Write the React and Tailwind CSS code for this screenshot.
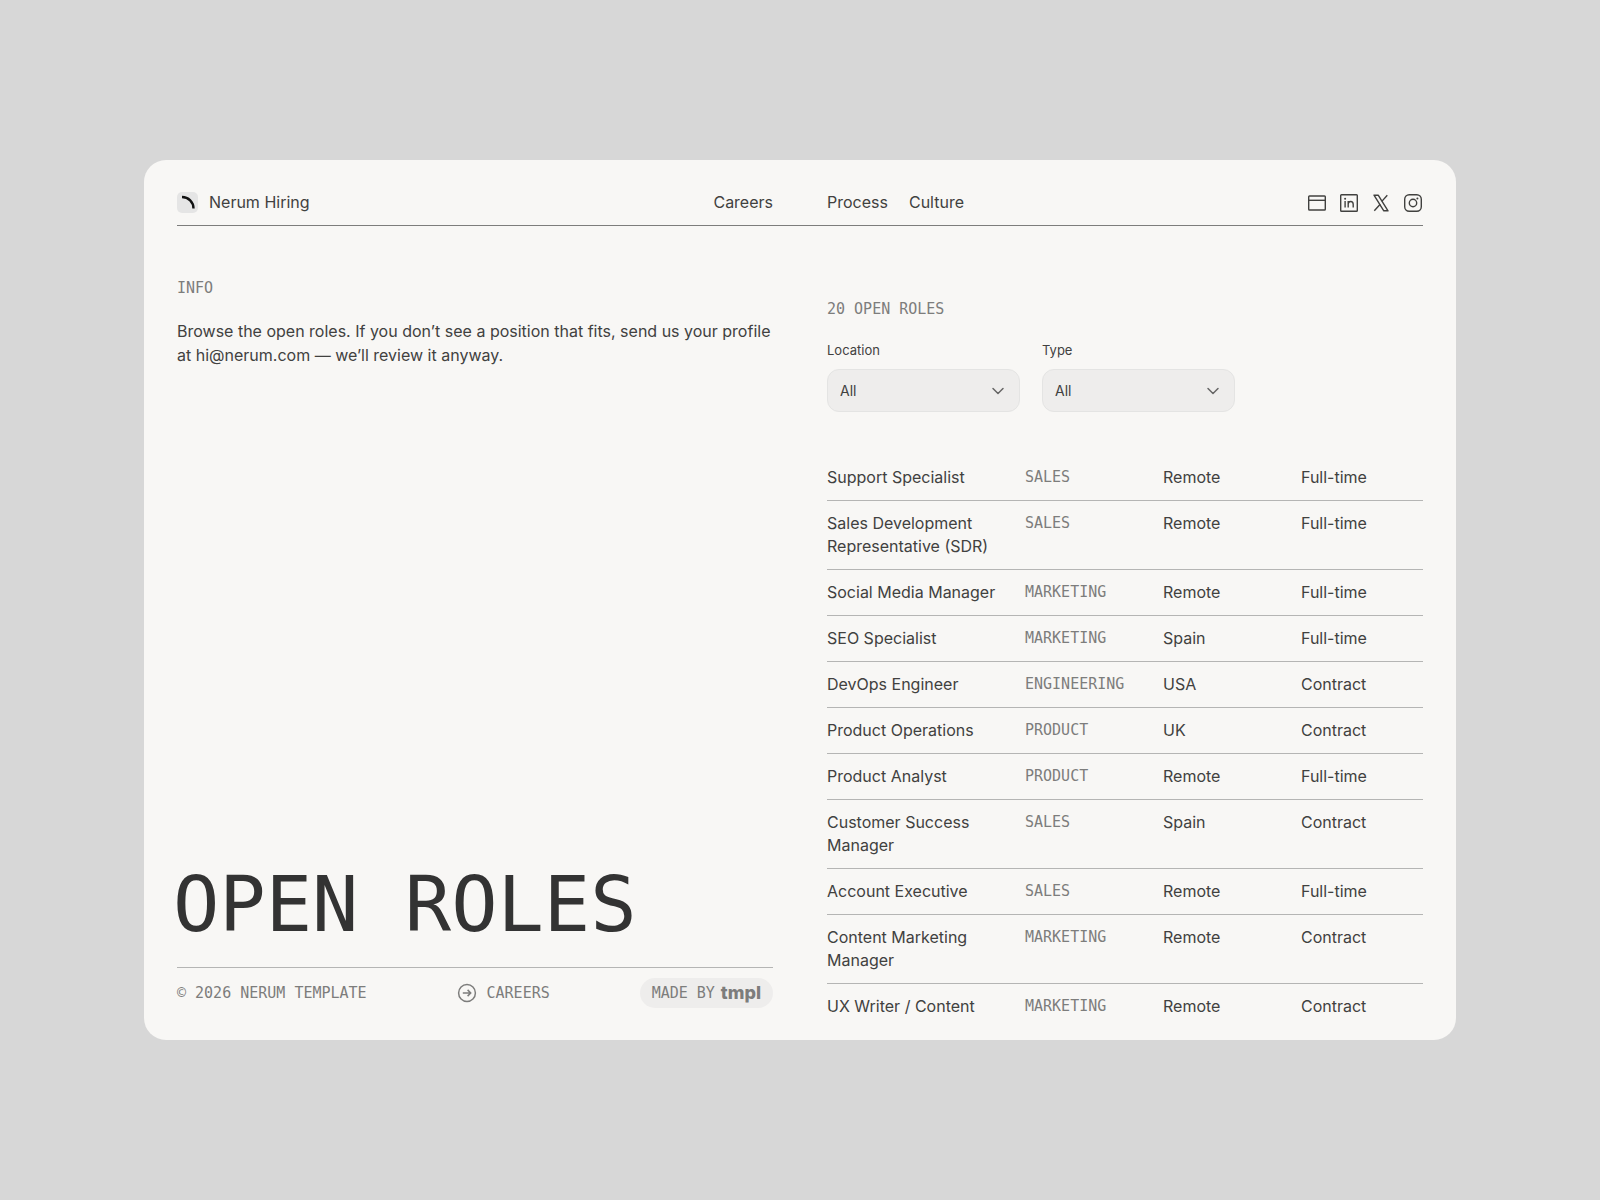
import React from 'react';
import { ChevronDown } from 'lucide-react';

const roles = [
  { title: 'Support Specialist', team: 'Sales', location: 'Remote', type: 'Full-time' },
  { title: 'Sales Development Representative (SDR)', team: 'Sales', location: 'Remote', type: 'Full-time' },
  { title: 'Social Media Manager', team: 'Marketing', location: 'Remote', type: 'Full-time' },
  { title: 'SEO Specialist', team: 'Marketing', location: 'Spain', type: 'Full-time' },
  { title: 'DevOps Engineer', team: 'Engineering', location: 'USA', type: 'Contract' },
  { title: 'Product Operations', team: 'Product', location: 'UK', type: 'Contract' },
  { title: 'Product Analyst', team: 'Product', location: 'Remote', type: 'Full-time' },
  { title: 'Customer Success Manager', team: 'Sales', location: 'Spain', type: 'Contract' },
  { title: 'Account Executive', team: 'Sales', location: 'Remote', type: 'Full-time' },
  { title: 'Content Marketing Manager', team: 'Marketing', location: 'Remote', type: 'Contract' },
  { title: 'UX Writer / Content', team: 'Marketing', location: 'Remote', type: 'Contract' },
];

const mono = "font-['DejaVu_Sans_Mono',monospace] text-[15px] uppercase text-[#7d7d7c]";

function Logo() {
  return (
    <svg viewBox="0 0 21 21" className="size-[21px]" aria-hidden="true">
      <rect width="21" height="21" rx="5" fill="#e5e5e5" />
      <path d="M5 5c6.500 0 11.500 5 11.500 11.500" fill="none" stroke="#111" strokeWidth="2.400" />
    </svg>
  );
}

function Filter({ id, label, options }) {
  return (
    <div className="w-[193px]">
      <label htmlFor={id} className="block text-[13px] leading-5">{label}</label>
      <div className="mt-[9px] grid items-center">
        <select
          id={id}
          className="col-start-1 row-start-1 h-[43px] w-full appearance-none rounded-xl border border-[#e4e4e3] bg-[#eeedec] px-3 text-sm"
        >
          {options.map((option) => (
            <option key={option}>{option}</option>
          ))}
        </select>
        <ChevronDown
          className="pointer-events-none col-start-1 row-start-1 mr-3 size-5 justify-self-end text-[#666]"
          strokeWidth={1.8}
        />
      </div>
    </div>
  );
}

function Header() {
  return (
    <header className="grid grid-cols-2 items-center gap-x-[54px] border-b border-[#7d7d7c] pb-3 leading-[21px]">
      <div className="flex items-center justify-between">
        <a href="#home" className="flex items-center gap-[11px]">
          <Logo />
          Nerum Hiring
        </a>
        <a href="#careers">Careers</a>
      </div>
      <div className="flex items-center justify-between">
        <nav className="flex gap-[21px]">
          <a href="#process">Process</a>
          <a href="#culture">Culture</a>
        </nav>
        <div className="flex items-center gap-3">
          <a href="#website" aria-label="Website">
            <svg viewBox="0 0 20 20" className="size-5" fill="none" stroke="currentColor" strokeWidth="1.400">
              <rect x="1.700" y="3" width="16.600" height="14" rx="0.800" />
              <path d="M1.700 7.300h16.600" />
            </svg>
          </a>
          <a href="#linkedin" aria-label="LinkedIn">
            <svg viewBox="0 0 20 20" className="size-5" fill="none" stroke="currentColor" strokeWidth="1.400">
              <rect x="1.700" y="1.700" width="16.600" height="16.600" rx="0.800" />
              <path d="M6.100 8v6.500M9.200 8v6.500M9.200 11.200c0-1.900 1.100-2.700 2.500-2.700 1.500 0 2.500.9 2.500 2.800v3.200" />
              <circle cx="6.100" cy="5.700" r="1" fill="currentColor" stroke="none" />
            </svg>
          </a>
          <a href="#x" aria-label="X">
            <svg viewBox="0 0 20 20" className="size-5" fill="none" stroke="currentColor" strokeWidth="1.400" strokeLinejoin="round">
              <path d="M3 2.200h4.200L17 17.800h-4.200z" />
              <path d="M16.300 2.200l-5.500 6.200M9.200 11.300l-5.900 6.500" />
            </svg>
          </a>
          <a href="#instagram" aria-label="Instagram">
            <svg viewBox="0 0 20 20" className="size-5" fill="none" stroke="currentColor" strokeWidth="1.400">
              <rect x="1.700" y="1.700" width="16.600" height="16.600" rx="4.500" />
              <circle cx="10" cy="10" r="3.700" />
              <circle cx="14.400" cy="5.600" r="1" fill="currentColor" stroke="none" />
            </svg>
          </a>
        </div>
      </div>
    </header>
  );
}

function Footer() {
  return (
    <footer className={`flex items-center justify-between border-t border-[#b5b5b4] pt-[10px] ${mono}`}>
      <span>© 2026 Nerum Template</span>
      <a href="#careers" className="flex items-center gap-[10px]">
        <svg viewBox="0 0 20 20" className="size-5" fill="none" stroke="currentColor" strokeWidth="1.500">
          <circle cx="10" cy="10" r="8.400" />
          <path d="M5.800 10h7.800M10.600 6.900l3.100 3.100-3.100 3.100" />
        </svg>
        Careers
      </a>
      <a href="#tmpl" className="flex h-[30px] items-center gap-1.5 rounded-full bg-[#eeedec] px-3">
        Made by
        <span className="font-['Inter',sans-serif] text-lg font-extrabold lowercase">tmpl</span>
      </a>
    </footer>
  );
}

function App() {
  return (
    <div className="flex min-h-screen items-center bg-[#d7d7d7] px-36 font-['Inter',sans-serif] text-base text-[#41413f]">
      <div className="w-full rounded-[22px] bg-[#f8f7f5] px-[33px] pt-8 pb-[22px]">
        <Header />
        <main className="grid grid-cols-2 gap-x-[54px]">
          {/* Info column */}
          <div className="flex flex-col justify-between pt-[52px] pb-[10px]">
            <section>
              <h2 className={`leading-5 ${mono}`}>Info</h2>
              <p className="mt-[21px] leading-6">
                Browse the open roles. If you don’t see a position that fits, send us your profile at hi@nerum.com — we’ll review it anyway.
              </p>
            </section>
            <div>
              <h1 className="mb-5 -ml-1 font-['DejaVu_Sans_Mono',monospace] text-[77px] leading-[84px] text-[#333]">OPEN ROLES</h1>
              <Footer />
            </div>
          </div>

          {/* Roles column */}
          <section className="pt-[73px]">
            <h2 className={`leading-5 ${mono}`}>20 Open Roles</h2>
            <div className="mt-[21px] flex gap-[22px]">
              <Filter id="location" label="Location" options={['All', 'Remote', 'Spain', 'UK', 'USA']} />
              <Filter id="type" label="Type" options={['All', 'Full-time', 'Contract']} />
            </div>
            <table className="mt-[43px] w-full table-fixed text-left leading-[23px]">
              <colgroup>
                <col />
                <col className="w-[138px]" />
                <col className="w-[138px]" />
                <col className="w-[122px]" />
              </colgroup>
              <tbody className="divide-y divide-[#b5b5b4]">
                {roles.map((role) => (
                  <tr key={role.title} className="group align-top">
                    <td className="py-[11px] pr-5 group-last:pb-0">{role.title}</td>
                    <td className={`py-[11px] group-last:pb-0 ${mono}`}>{role.team}</td>
                    <td className="py-[11px] group-last:pb-0">{role.location}</td>
                    <td className="py-[11px] group-last:pb-0">{role.type}</td>
                  </tr>
                ))}
              </tbody>
            </table>
          </section>
        </main>
      </div>
    </div>
  );
}

export default App;
